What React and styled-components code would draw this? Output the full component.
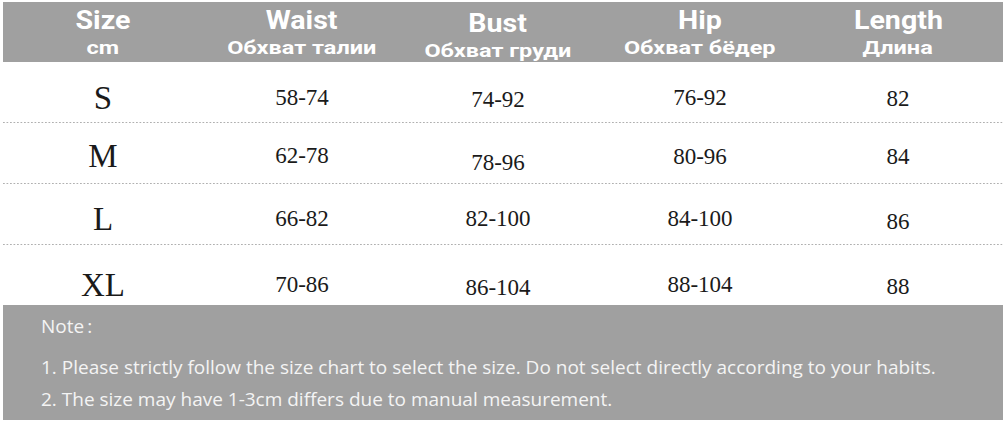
import React from "react";
import styled, { createGlobalStyle } from "styled-components";

const GlobalStyle = createGlobalStyle`
  html, body {
    margin: 0;
    padding: 0;
    background: #ffffff;
  }
`;

const columns = [
  { title: "Size", sub: "cm" },
  { title: "Waist", sub: "Обхват талии" },
  { title: "Bust", sub: "Обхват груди", dy: 3 },
  { title: "Hip", sub: "Обхват бёдер" },
  { title: "Length", sub: "Длина" },
];

const rows = [
  { size: "S", shift: 5, values: [["58-74"], ["74-92", 2], ["76-92"], ["82", 1]] },
  { size: "M", shift: 2, values: [["62-78"], ["78-96", 7], ["80-96", 1], ["84", 1]] },
  { size: "L", shift: 4, values: [["66-82"], ["82-100"], ["84-100"], ["86", 3]] },
  { size: "XL", shift: 10, values: [["70-86"], ["86-104", 3], ["88-104"], ["88", 2]], last: true },
];

function App() {
  return (
    <Page>
      <GlobalStyle />
      <Chart>
        <HeaderBar>
          {columns.map((col) => (
            <HeadCell key={col.title} $dy={col.dy || 0}>
              <HeadTitle>{col.title}</HeadTitle>
              <HeadSub>{col.sub}</HeadSub>
            </HeadCell>
          ))}
        </HeaderBar>
        {rows.map((row) => (
          <Row key={row.size} $shift={row.shift} $last={row.last}>
            <SizeCell>{row.size}</SizeCell>
            {row.values.map(([value, dy]) => (
              <ValueCell key={value} $dy={dy || 0}>
                {value}
              </ValueCell>
            ))}
          </Row>
        ))}
        <NotePanel>
          <NoteHead>
            Note<Colon>:</Colon>
          </NoteHead>
          <NoteLine>
            1. Please strictly follow the size chart to select the size. Do not
            select directly according to your habits.
          </NoteLine>
          <NoteLine $tight>
            2. The size may have 1-3cm differs due to manual measurement.
          </NoteLine>
        </NotePanel>
      </Chart>
    </Page>
  );
}

export default App;

const Page = styled.div`
  width: 1007px;
  height: 425px;
  padding: 2px 4px 0 3px;
  box-sizing: border-box;
  background: #ffffff;
`;

const Chart = styled.div`
  display: flex;
  flex-direction: column;
  width: 1000px;
`;

const grid = `
  display: grid;
  grid-template-columns: 200px 198px 194px 210px 186px;
  padding-right: 12px;
`;

const HeaderBar = styled.div`
  ${grid}
  height: 60px;
  background: #a0a0a0;
  color: #ffffff;
  font-family: Roboto, "Noto Sans", sans-serif;
  font-weight: 700;
`;

const HeadCell = styled.div`
  display: flex;
  flex-direction: column;
  align-items: center;
  padding-top: ${(p) => 4 + p.$dy}px;
`;

const HeadTitle = styled.div`
  font-size: 26px;
  line-height: 28px;
  transform: scaleX(1.1);
`;

const HeadSub = styled.div`
  font-size: 18.5px;
  line-height: 22px;
  margin-top: 3px;
  transform: scaleX(1.27);
`;

const Row = styled.div`
  ${grid}
  height: ${(p) => (p.$last ? 60 : 61)}px;
  align-items: center;
  padding-top: ${(p) => p.$shift * 2}px;
  box-sizing: border-box;
  font-family: "Liberation Serif", "Times New Roman", serif;
  color: #1a1a1a;
  background-image: ${(p) =>
    p.$last
      ? "none"
      : "linear-gradient(to right, #b0b0b0 1.5px, transparent 1.5px)"};
  background-size: 3.5px 1px;
  background-repeat: repeat-x;
  background-position: left bottom 0;
`;

const SizeCell = styled.div`
  text-align: center;
  font-size: 33px;
  line-height: 34px;
`;

const ValueCell = styled.div`
  text-align: center;
  font-size: 23px;
  line-height: 24px;
  padding-top: ${(p) => p.$dy * 2}px;
`;

const NotePanel = styled.div`
  display: flex;
  flex-direction: column;
  height: 115px;
  box-sizing: border-box;
  padding: 8px 0 0 38px;
  background: #a0a0a0;
  color: #f4f4f4;
  font-family: "Open Sans", "Noto Sans", sans-serif;
  font-size: 19px;
`;

const NoteHead = styled.div`
  line-height: 26px;
  margin-bottom: 15px;
`;

const Colon = styled.span`
  margin-left: 3px;
`;

const NoteLine = styled.div`
  line-height: 26px;
  margin-bottom: ${(p) => (p.$tight ? 0 : 6)}px;
`;
